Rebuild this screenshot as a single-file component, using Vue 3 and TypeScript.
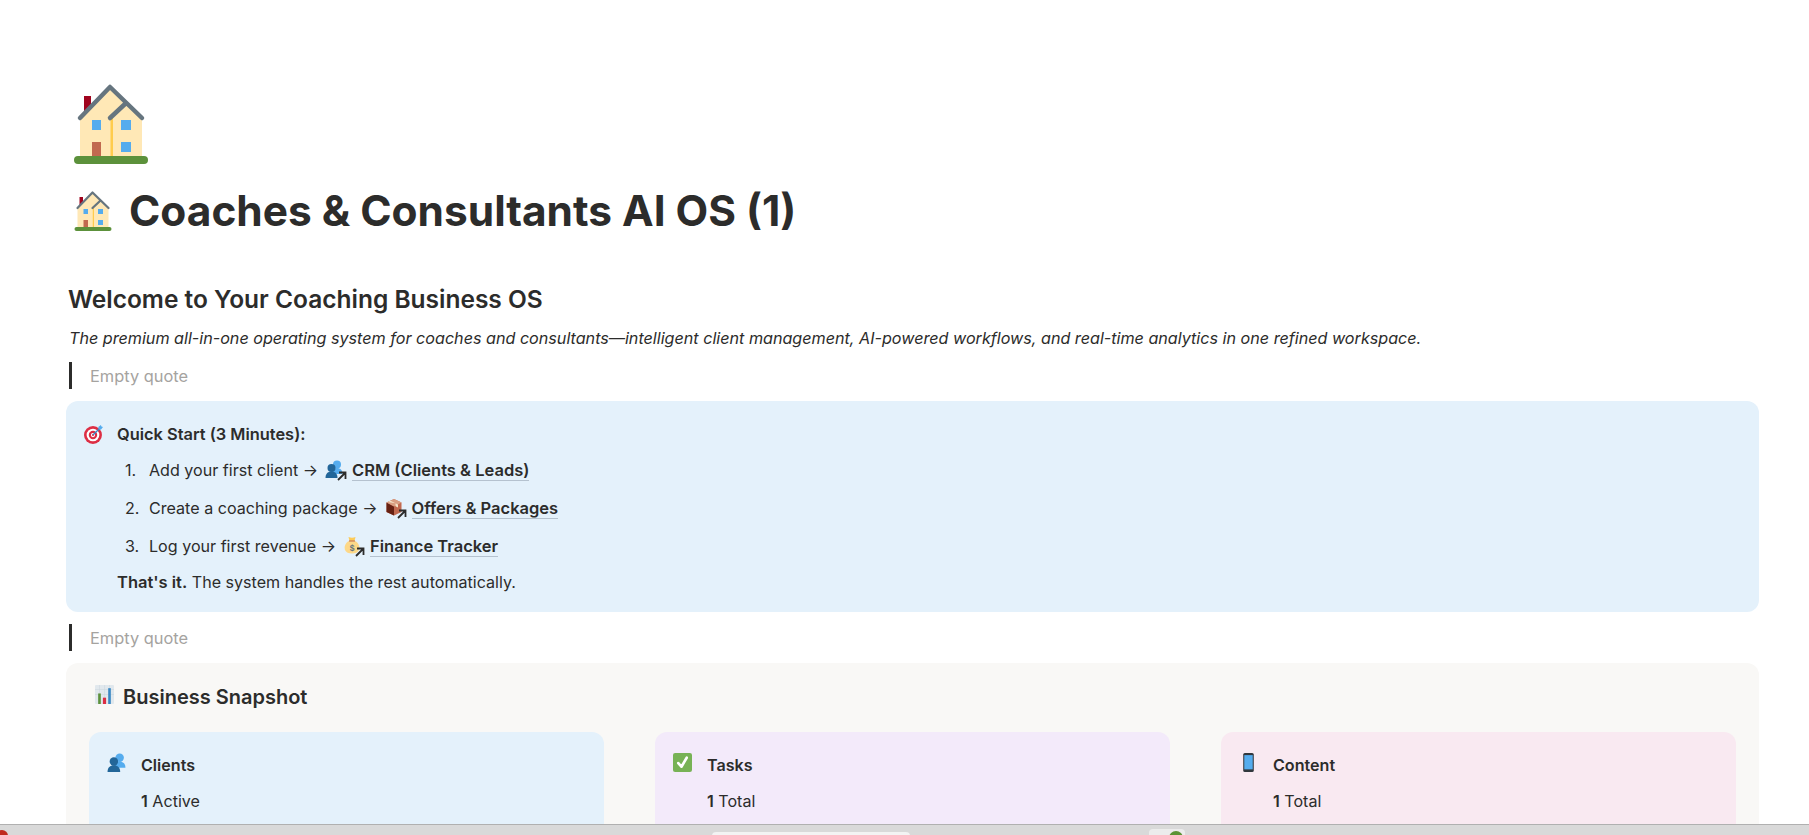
<script setup lang="ts">
type Link = { before: string; label: string; icon: string }
type Stat = { title: string; count: string; word: string; tone: string; icon: string }

const steps: Link[] = [
  { before: 'Add your first client →', label: 'CRM (Clients & Leads)', icon: 'people' },
  { before: 'Create a coaching package →', label: 'Offers & Packages', icon: 'box' },
  { before: 'Log your first revenue →', label: 'Finance Tracker', icon: 'money' },
]

const stats: Stat[] = [
  { title: 'Clients', count: '1', word: 'Active', tone: 'blue', icon: 'people' },
  { title: 'Tasks', count: '1', word: 'Total', tone: 'purple', icon: 'check' },
  { title: 'Content', count: '1', word: 'Total', tone: 'pink', icon: 'phone' },
]
</script>

<template>
  <div class="page">
    <div class="doc">
      <svg class="page-icon" viewBox="0 0 74 78">
        <path fill="#A0041E" d="M10 10h7v20h-7z" />
        <path fill="#FFE8B6" d="M6 32 36 1l32 31v39H6z" />
        <path fill="#FFCC4D" d="M36.500 32H39v39h-2.500z" />
        <path fill="#55ACEE" d="M18 34h9v10h-9zM47 34h10v10H47zM47 56h10v10H47z" />
        <path fill="#C1694F" d="M18 56h9v15h-9z" />
        <path fill="none" stroke="#66757F" stroke-width="4.500" stroke-linecap="round" stroke-linejoin="round" d="M6 32 36 1l32 31M36 32l15-14" />
        <rect y="70" width="74" height="8" rx="4" fill="#5C913B" />
      </svg>

      <h1 class="title">
        <svg class="title-icon" viewBox="0 0 74 78">
          <path fill="#A0041E" d="M10 10h7v20h-7z" />
          <path fill="#FFE8B6" d="M6 32 36 1l32 31v39H6z" />
          <path fill="#FFCC4D" d="M36.500 32H39v39h-2.500z" />
          <path fill="#55ACEE" d="M18 34h9v10h-9zM47 34h10v10H47zM47 56h10v10H47z" />
          <path fill="#C1694F" d="M18 56h9v15h-9z" />
          <path fill="none" stroke="#66757F" stroke-width="4.500" stroke-linecap="round" stroke-linejoin="round" d="M6 32 36 1l32 31M36 32l15-14" />
          <rect y="70" width="74" height="8" rx="4" fill="#5C913B" />
        </svg>
        <span>Coaches &amp; Consultants AI OS (1)</span>
      </h1>

      <h2 class="welcome">Welcome to Your Coaching Business OS</h2>
      <p class="tagline">The premium all-in-one operating system for coaches and consultants—intelligent client management, AI-powered workflows, and real-time analytics in one refined workspace.</p>
      <div class="quote">Empty quote</div>

      <section class="callout">
        <svg class="callout-icon" viewBox="0 0 36 36">
          <circle cx="17" cy="19" r="17" fill="#DD2E44" />
          <circle cx="17" cy="19" r="12" fill="#fff" />
          <circle cx="17" cy="19" r="8" fill="#DD2E44" />
          <circle cx="17" cy="19" r="4" fill="#fff" />
          <circle cx="17" cy="19" r="2" fill="#DD2E44" />
          <path stroke="#3B88C3" stroke-width="2.500" d="M17 19 29 7" />
          <path fill="#55ACEE" d="m27 4 5-4 1 3 3 1-4 5-4-1z" />
        </svg>
        <div class="callout-body">
          <p class="callout-title">Quick Start (3 Minutes):</p>
          <ol class="steps">
            <li v-for="(step, i) in steps" :key="step.label" class="step">
              <span class="step-num">{{ i + 1 }}.</span>
              <span>{{ step.before }}</span>
              <span class="link-icon">
                <svg v-if="step.icon === 'people'" viewBox="0 0 36 36">
                  <circle cx="24" cy="9" r="8" fill="#55ACEE" />
                  <path fill="#55ACEE" d="M13 28c0-8 5-12 11-12s11 4 11 12z" />
                  <circle cx="13" cy="16" r="8" fill="#269" />
                  <path fill="#269" d="M1 36c0-9 5-13 12-13s12 4 12 13z" />
                </svg>
                <svg v-else-if="step.icon === 'box'" viewBox="0 0 36 36">
                  <path fill="#C1694F" d="m18 2 15 7v19l-15 7-15-7V9z" />
                  <path fill="#662113" d="M3 9v19l15 7V17z" />
                  <path fill="#D99E82" d="m3 9 15-7 15 7-15 8z" />
                  <path fill="#F4E3C8" d="m11 5.500 15 7.500v6l-5-2.500v-6L6 8z" />
                </svg>
                <svg v-else viewBox="0 0 36 36">
                  <path fill="#FDD888" d="M24 10c8 4 10 12 8 18-2 5-7 7-14 7S6 33 4 28c-2-6 0-14 8-18z" />
                  <path fill="#FDCB58" d="M11 2c4 2 10 2 14 0l-2 8H13z" />
                  <path fill="#BF6952" d="M12 9h12v2H12z" />
                  <text x="18" y="29" font-size="17" font-weight="700" text-anchor="middle" fill="#67757F" font-family="'Liberation Sans', sans-serif">$</text>
                </svg>
                <svg class="arrow" viewBox="0 0 12 12">
                  <path fill="none" stroke="#2c2c2b" stroke-width="1.800" d="M3 2.500h6.500V9M9.500 2.500 2 10" />
                </svg>
              </span>
              <span class="page-link">{{ step.label }}</span>
            </li>
          </ol>
          <p class="done"><strong>That's it.</strong> The system handles the rest automatically.</p>
        </div>
      </section>

      <div class="quote">Empty quote</div>

      <section class="snapshot">
        <h3 class="snapshot-title">
          <svg class="snapshot-icon" viewBox="0 0 36 36">
            <rect width="36" height="36" rx="2" fill="#E1E8ED" />
            <path fill="#CCD6DD" d="M0 8h36v1H0zM0 17h36v1H0zM8 0h1v36H8zM18 0h1v36h-1zM27 0h1v36h-1z" />
            <path fill="#5C913B" d="M6 16h5v20H6z" />
            <path fill="#DD2E44" d="M15 24h6v12h-6z" />
            <path fill="#3B88C3" d="M25 6h5v30h-5z" />
          </svg>
          Business Snapshot
        </h3>
        <div class="cards">
          <div v-for="stat in stats" :key="stat.title" class="card" :class="stat.tone">
            <span class="card-icon">
              <svg v-if="stat.icon === 'people'" viewBox="0 0 36 36">
                <circle cx="24" cy="9" r="8" fill="#55ACEE" />
                <path fill="#55ACEE" d="M13 28c0-8 5-12 11-12s11 4 11 12z" />
                <circle cx="13" cy="16" r="8" fill="#269" />
                <path fill="#269" d="M1 36c0-9 5-13 12-13s12 4 12 13z" />
              </svg>
              <svg v-else-if="stat.icon === 'check'" viewBox="0 0 36 36">
                <rect width="36" height="36" rx="4" fill="#77B255" />
                <path fill="none" stroke="#fff" stroke-width="5" stroke-linecap="round" stroke-linejoin="round" d="M10 19l6 7 10-17" />
              </svg>
              <svg v-else viewBox="0 0 36 36">
                <rect x="8" width="20" height="36" rx="3" fill="#31373D" />
                <path fill="#55ACEE" d="M10 4h16v27H10z" />
              </svg>
            </span>
            <div class="card-body">
              <div class="card-title">{{ stat.title }}</div>
              <div class="card-line"><b>{{ stat.count }}</b> {{ stat.word }}</div>
            </div>
          </div>
        </div>
      </section>
    </div>

    <footer class="taskbar">
      <span class="app-dot"></span>
      <span class="tab-edge"></span>
      <span class="green-tab"><i></i></span>
    </footer>
  </div>
</template>

<style>
html,
body {
  margin: 0;
  height: 100%;
  overflow: hidden;
  background: #fff;
}
</style>

<style scoped>
.page {
  height: 835px;
  display: flex;
  flex-direction: column;
  overflow: hidden;
  color: #2c2c2b;
  font-family: Inter, "Noto Sans", sans-serif;
}

.doc {
  flex: 1;
  min-height: 0;
  overflow: hidden;
  padding: 86px 50px 0 66px;
}

.page-icon {
  display: block;
  width: 74px;
  height: 78px;
  margin-left: 8px;
  overflow: visible;
}

.title {
  display: flex;
  align-items: center;
  gap: 17px;
  margin: 17px 0 0 8px;
  font-size: 42.400px;
  line-height: 60px;
  font-weight: 700;
}

.title-icon {
  width: 38px;
  height: 39px;
  overflow: visible;
}

.welcome {
  margin: 38px 0 0 2px;
  font-size: 24.500px;
  line-height: 40px;
  font-weight: 600;
}

.tagline {
  margin: 5px 0 0 3px;
  font-size: 16.150px;
  line-height: 28px;
  font-style: italic;
  white-space: nowrap;
}

.quote {
  margin: 10px 0 0 3px;
  padding: 1px 0 0 18px;
  border-left: 3px solid #2c2c2b;
  font-size: 16.400px;
  line-height: 26px;
  color: #a5a3a0;
}

.callout {
  display: flex;
  gap: 14px;
  margin: 12px 0;
  padding: 21px 20px 18px 18px;
  border-radius: 12px;
  background: #e4f1fb;
}

.callout + .quote {
  margin-top: 0;
}

.callout-icon {
  flex: none;
  width: 19px;
  height: 19px;
  margin-top: 3px;
}

.callout-body {
  flex: 1;
  font-size: 16.100px;
  line-height: 24px;
}

.callout-title {
  margin: 0;
  font-size: 16.400px;
  font-weight: 600;
}

.steps {
  margin: 12px 0 0;
  padding: 0 0 0 8px;
  list-style: none;
  display: flex;
  flex-direction: column;
  gap: 14px;
}

.step {
  display: flex;
  align-items: center;
  height: 24px;
}

.step-num {
  width: 24px;
}

.link-icon {
  position: relative;
  width: 20px;
  height: 20px;
  flex: none;
  margin: 0 7px 0 7px;
}

.link-icon svg {
  display: block;
  width: 18px;
  height: 18px;
}

.link-icon .arrow {
  position: absolute;
  right: -3px;
  bottom: -2px;
  width: 12px;
  height: 12px;
}

.page-link {
  font-size: 16.500px;
  font-weight: 600;
  border-bottom: 1px solid #b5c2cf;
  line-height: 20px;
}

.done {
  margin: 12px 0 0;
}

.done strong {
  font-size: 16.500px;
  font-weight: 600;
}

.snapshot {
  margin-top: 12px;
  padding: 18px 23px 40px 29px;
  border-radius: 12px;
  background: #f9f8f6;
}

.snapshot-title {
  display: flex;
  align-items: center;
  gap: 9px;
  margin: 0;
  font-size: 20px;
  line-height: 32px;
  font-weight: 600;
}

.snapshot-icon {
  width: 19px;
  height: 19px;
  margin-top: -6px;
}

.cards {
  display: grid;
  grid-template-columns: repeat(3, 515px);
  gap: 51px;
  margin: 19px 0 0 -6px;
}

.card {
  display: flex;
  gap: 15px;
  padding: 21px 18px 40px;
  border-radius: 12px;
}

.card.blue { background: #e4f1fb; }
.card.purple { background: #f3eafa; }
.card.pink { background: #f9e9f1; }

.card-icon {
  flex: none;
  width: 19px;
  height: 19px;
}

.card-icon svg {
  display: block;
  width: 19px;
  height: 19px;
}

.card-body {
  font-size: 16.100px;
  line-height: 24px;
}

.card-title {
  font-weight: 600;
}

.card-line {
  margin-top: 12px;
}

.card-line b {
  font-weight: 600;
}

.taskbar {
  flex: none;
  position: relative;
  height: 10px;
  border-top: 1px solid #b0b0b0;
  background: #d9d9d9;
}

.app-dot {
  position: absolute;
  left: -4px;
  top: 5px;
  width: 12px;
  height: 12px;
  border-radius: 50%;
  background: #c02a1e;
}

.tab-edge {
  position: absolute;
  left: 712px;
  top: 7px;
  width: 198px;
  height: 10px;
  border-radius: 4px 4px 0 0;
  background: #f3f3f3;
}

.green-tab {
  position: absolute;
  left: 1149px;
  top: 4px;
  width: 36px;
  height: 10px;
  border-radius: 4px 4px 0 0;
  background: #ececec;
}

.green-tab i {
  position: absolute;
  left: 20px;
  top: 2px;
  width: 14px;
  height: 14px;
  border-radius: 50%;
  background: #5b9335;
}
</style>
